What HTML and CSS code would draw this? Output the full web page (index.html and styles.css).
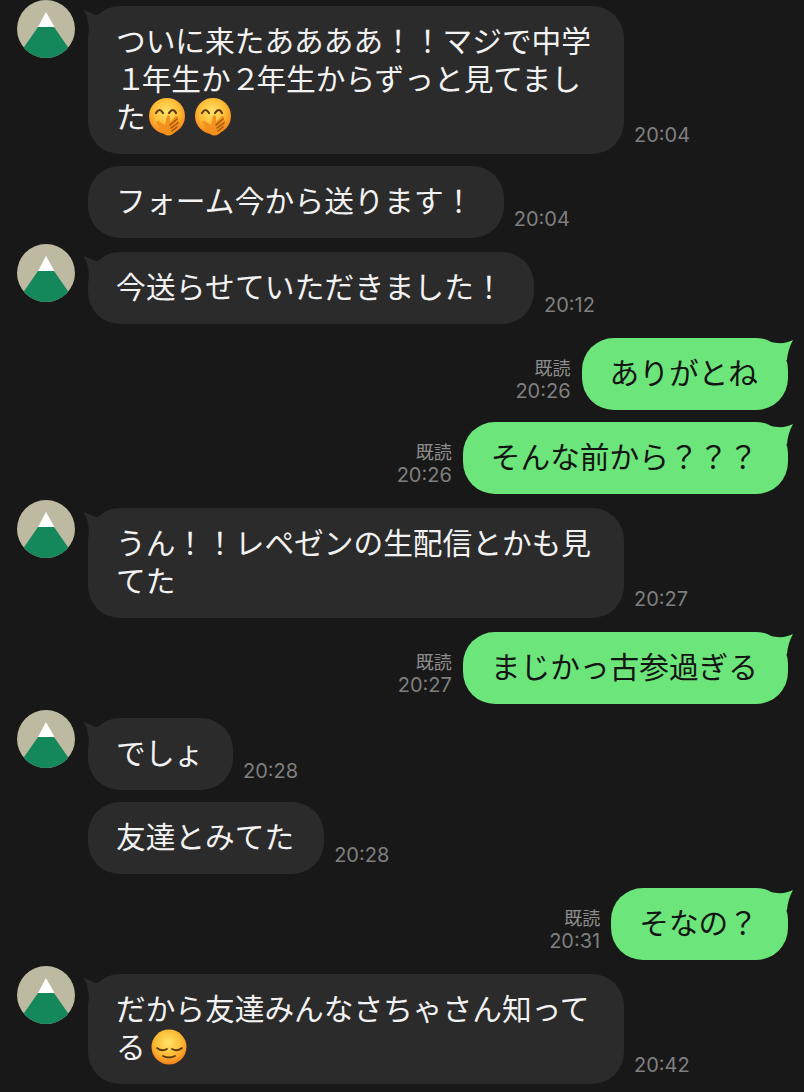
FILE: index.html
```html
<!DOCTYPE html>
<html lang="ja">
<head>
  <meta charset="UTF-8">
  <meta name="viewport" content="width=device-width, initial-scale=1.0">
  <title>Chat</title>
  <link rel="stylesheet" href="styles.css">
</head>
<body>

  <!-- Shared drawings -->
  <svg class="defs" width="0" height="0">
    <defs>
      <radialGradient id="face" cx="48%" cy="38%" r="62%">
        <stop offset="0" stop-color="#ffe36a"/>
        <stop offset="0.6" stop-color="#fdbb34"/>
        <stop offset="1" stop-color="#f5811c"/>
      </radialGradient>
      <clipPath id="avatar-clip">
        <circle cx="29" cy="29" r="29"/>
      </clipPath>
      <symbol id="avatar" viewBox="0 0 58 58">
        <g clip-path="url(#avatar-clip)">
          <rect width="58" height="58" fill="#bdbaa1"/>
          <path d="M-2 60 L21 27 L37 27 L60 60 Z" fill="#14875b"/>
          <path d="M29 12 L37.500 27 L21 27 Z" fill="#fff"/>
        </g>
      </symbol>
      <symbol id="hand-face" viewBox="0 0 38 38">
        <circle cx="19" cy="18" r="18" fill="url(#face)"/>
        <path d="M8 15 Q11.500 9 15 15 M21 15 Q25 9 28 15" fill="none" stroke="#5d3a12" stroke-width="2.200" stroke-linecap="round"/>
        <path d="M8 24 Q10 22 12 24 L17 27 L19 18 Q21 16 22 19 L22 24 L28 18 Q31 18 30 21 L31 23 Q33 24 31 27 Q29 33 25 36 Q20 39 16 36 Q11 31 8 24 Z" fill="#f2911c"/>
        <path d="M22 27 L29 21 M23 30 L30 25 M24 33 L29 29" stroke="#a3560f" stroke-width="1.500" stroke-linecap="round"/>
      </symbol>
      <symbol id="sad-face" viewBox="0 0 36 38">
        <circle cx="18" cy="19" r="17.500" fill="url(#face)"/>
        <path d="M6 20 Q11 24 16 21 M21 21 Q26 24 31 20" fill="none" stroke="#5d3a12" stroke-width="1.800" stroke-linecap="round"/>
        <path d="M12 28 Q18 31 24 28" fill="none" stroke="#5d3a12" stroke-width="1.800" stroke-linecap="round"/>
      </symbol>
    </defs>
  </svg>

  <main class="chat">

    <div class="row">
      <svg class="avatar avatar-first"><use href="#avatar"/></svg>
      <p class="bubble in wide">ついに来たああああ！！マジで中学<br><span class="num">１</span>年生か<span class="num">２</span>年生からずっと見てまし<br>た<svg class="emoji"><use href="#hand-face"/></svg><svg class="emoji emoji-gap"><use href="#hand-face"/></svg></p>
      <span class="meta"><span class="time">20:04</span></span>
    </div>

    <div class="row cont">
      <p class="bubble in no-tail loose">フォーム今から送ります！</p>
      <span class="meta"><span class="time">20:04</span></span>
    </div>

    <div class="row">
      <svg class="avatar"><use href="#avatar"/></svg>
      <p class="bubble in loose">今送らせていただきました！</p>
      <span class="meta"><span class="time">20:12</span></span>
    </div>

    <div class="row mine">
      <span class="meta"><span class="read">既読</span><span class="time">20:26</span></span>
      <p class="bubble out">ありがとね</p>
    </div>

    <div class="row mine cont">
      <span class="meta"><span class="read">既読</span><span class="time">20:26</span></span>
      <p class="bubble out">そんな前から？？？</p>
    </div>

    <div class="row">
      <svg class="avatar"><use href="#avatar"/></svg>
      <p class="bubble in wide">うん！！レペゼンの生配信とかも見<br>てた</p>
      <span class="meta"><span class="time">20:27</span></span>
    </div>

    <div class="row mine">
      <span class="meta"><span class="read">既読</span><span class="time">20:27</span></span>
      <p class="bubble out">まじかっ古参過ぎる</p>
    </div>

    <div class="row">
      <svg class="avatar"><use href="#avatar"/></svg>
      <p class="bubble in tight">でしょ</p>
      <span class="meta"><span class="time">20:28</span></span>
    </div>

    <div class="row cont">
      <p class="bubble in no-tail">友達とみてた</p>
      <span class="meta"><span class="time">20:28</span></span>
    </div>

    <div class="row mine">
      <span class="meta"><span class="read">既読</span><span class="time">20:31</span></span>
      <p class="bubble out">そなの？</p>
    </div>

    <div class="row">
      <svg class="avatar"><use href="#avatar"/></svg>
      <p class="bubble in wide">だから友達みんなさちゃさん知って<br>る<svg class="emoji emoji-sad"><use href="#sad-face"/></svg></p>
      <span class="meta"><span class="time">20:42</span></span>
    </div>

  </main>

</body>
</html>
```

FILE: styles.css
```css
/* General Styling */
html, body {
  height: 100%;
}

body {
  margin: 0;
  background-color: #181818;
  font-family: "Noto Sans CJK JP", "Noto Sans", sans-serif;
  overflow: hidden;
}

.defs {
  position: absolute;
}

/* Chat */
.chat {
  display: flex;
  flex-direction: column;
  padding: 6px 16px 0 17px;
}

.row {
  display: flex;
  align-items: flex-end;
  gap: 11px;
  margin-top: 14px;
}

.row:first-child {
  margin-top: 0;
}

.row.cont {
  margin-top: 12px;
}

.row.mine {
  justify-content: flex-end;
}

.avatar {
  align-self: flex-start;
  flex: none;
  width: 58px;
  height: 58px;
  margin: -8px 2px 0 0;
}

.avatar-first {
  margin-top: -6px;
}

/* Bubbles */
.bubble {
  position: relative;
  margin: 0;
  padding: 15px 30px 19px 28px;
  border-radius: 32px;
  font-size: 29.7px;
  line-height: 38px;
  white-space: nowrap;
}

.bubble.in {
  background: #2b2b2b;
  color: #f2f2f2;
}

.bubble.wide {
  min-width: 478px;
}

.bubble.loose {
  letter-spacing: 0.2px;
}

.bubble.tight {
  letter-spacing: -0.7px;
}

.bubble.no-tail {
  margin-left: 71px;
}

.bubble.out {
  background: #6ce67a;
  color: #141414;
}

.bubble.in::before,
.bubble.out::before {
  content: "";
  position: absolute;
  top: 2px;
  width: 30px;
  height: 28px;
}

.bubble.in::before {
  left: -6px;
  background: #2b2b2b;
  clip-path: path("M1 1 Q8 6 20 8 L24 24 L7 24 Q7 10 1 1 Z");
}

.bubble.no-tail::before {
  display: none;
}

.bubble.out::before {
  right: -6px;
  background: #6ce67a;
  clip-path: path("M29 0 Q20 5 6 2 L10 24 L23 20 Q24 9 29 0 Z");
}

.num {
  letter-spacing: -4px;
}

/* Time and read mark */
.meta {
  display: flex;
  flex-direction: column;
  align-items: flex-end;
  padding-bottom: 7px;
  font-family: Inter, "Noto Sans CJK JP", sans-serif;
  color: #7f7f7f;
}

.row:not(.mine) .meta {
  margin-left: -1px;
}

.time {
  font-size: 20px;
  line-height: 24px;
}

.read {
  font-family: "Noto Sans CJK JP", sans-serif;
  font-size: 18px;
  line-height: 24px;
  color: #8c8c8c;
}

/* Emoji */
.emoji {
  width: 38px;
  height: 38px;
  margin: -6px 0 -6px 2px;
  vertical-align: -2px;
}

.emoji-gap {
  margin-left: 8px;
}

.emoji-sad {
  width: 36px;
  margin-left: 5px;
}
```
